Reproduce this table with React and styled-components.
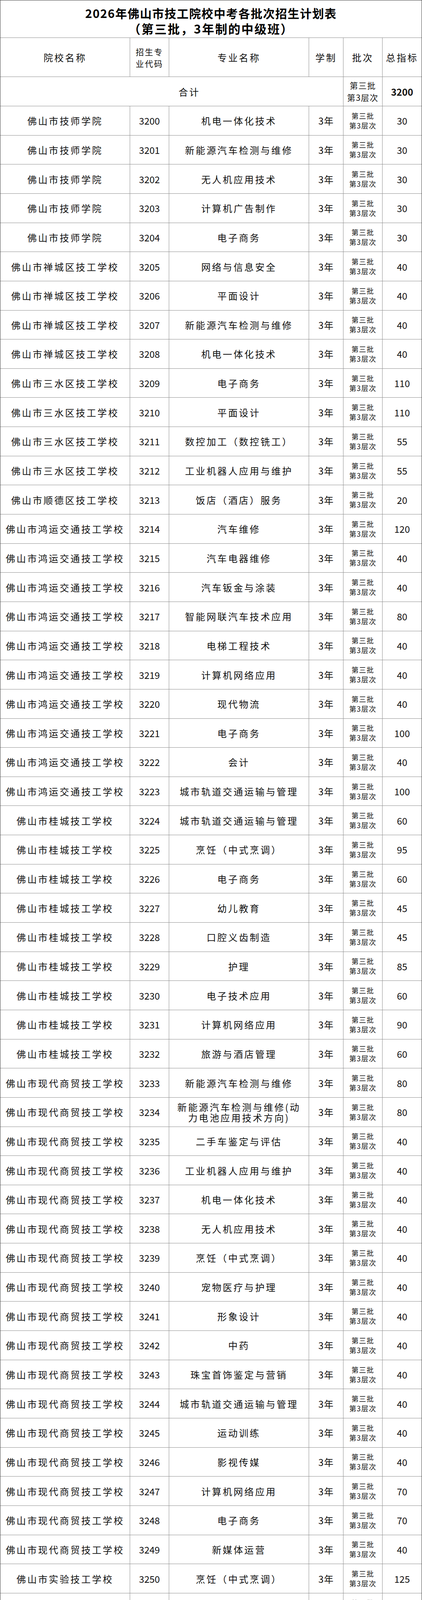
import React from "react";
import styled, { createGlobalStyle } from "styled-components";

const GlobalStyle = createGlobalStyle`
  html, body { margin: 0; padding: 0; background: #ffffff; width: 1080px; height: 4677px; overflow: hidden; }
  body { font-family: "Noto Sans CJK SC", "Noto Sans", sans-serif; color: #111; }
  #root { width: 1080px; height: 4677px; }
  * { box-sizing: border-box; }
`;

const LINE = "#8f8f8f";

const Sheet = styled.div`
  width: 1080px;
  height: 4677px;
  display: grid;
  grid-template-columns: 332px 100px 358px 88px 100px 100px;
  grid-template-rows: 96px 100px 75px repeat(59, 1fr);
  border: 1px solid #3c3c3c;
  background: #fff;
  overflow: hidden;
`;

const Cell = styled.div`
  display: flex;
  flex-direction: column;
  align-items: center;
  justify-content: center;
  text-align: center;
  min-width: 0;
  min-height: 0;
  overflow: hidden;
  border-right: ${(p) => (p.$lastCol ? "none" : `1px solid ${LINE}`)};
  border-bottom: ${(p) => (p.$lastRow ? "none" : `1px solid ${LINE}`)};
  font-size: 24px;
  line-height: 27px;
  color: #111;
  white-space: nowrap;
`;

const TitleCell = styled(Cell)`
  grid-column: 1 / -1;
  justify-content: flex-start;
  padding-top: 12px;
  font-weight: 700;
  line-height: 40px;
  color: #000;
`;

const TitleLine = styled.div`
  letter-spacing: ${(p) => p.$spacing}px;
  font-size: ${(p) => p.$size}px;
`;

const HeadCell = styled(Cell)`
  letter-spacing: 3.5px;
`;

const SmallHeadCell = styled(Cell)`
  font-size: 21px;
  line-height: 30px;
  letter-spacing: 2.5px;
`;

const TotalLabel = styled(Cell)`
  grid-column: 1 / span 4;
  padding-left: 90px;
  letter-spacing: 3.5px;
`;

const SchoolCell = styled(Cell)`
  letter-spacing: 3.6px;
`;

const CodeCell = styled(Cell)`
  letter-spacing: 0;
`;

const MajorCell = styled(Cell)`
  letter-spacing: 3.6px;
`;

const YearsCell = styled(Cell)`
  letter-spacing: 1px;
`;

const BatchCell = styled(Cell)`
  font-size: ${(p) => (p.$big ? 21 : 18)}px;
  line-height: ${(p) => (p.$big ? 31 : 25)}px;
  letter-spacing: 1.4px;
`;

const QuotaCell = styled(Cell)`
  font-weight: ${(p) => (p.$bold ? 700 : 400)};
`;

const rows = [
  ["佛山市技师学院", "3200", "机电一体化技术", 30],
  ["佛山市技师学院", "3201", "新能源汽车检测与维修", 30],
  ["佛山市技师学院", "3202", "无人机应用技术", 30],
  ["佛山市技师学院", "3203", "计算机广告制作", 30],
  ["佛山市技师学院", "3204", "电子商务", 30],
  ["佛山市禅城区技工学校", "3205", "网络与信息安全", 40],
  ["佛山市禅城区技工学校", "3206", "平面设计", 40],
  ["佛山市禅城区技工学校", "3207", "新能源汽车检测与维修", 40],
  ["佛山市禅城区技工学校", "3208", "机电一体化技术", 40],
  ["佛山市三水区技工学校", "3209", "电子商务", 110],
  ["佛山市三水区技工学校", "3210", "平面设计", 110],
  ["佛山市三水区技工学校", "3211", "数控加工（数控铣工）", 55],
  ["佛山市三水区技工学校", "3212", "工业机器人应用与维护", 55],
  ["佛山市顺德区技工学校", "3213", "饭店（酒店）服务", 20],
  ["佛山市鸿运交通技工学校", "3214", "汽车维修", 120],
  ["佛山市鸿运交通技工学校", "3215", "汽车电器维修", 40],
  ["佛山市鸿运交通技工学校", "3216", "汽车钣金与涂装", 40],
  ["佛山市鸿运交通技工学校", "3217", "智能网联汽车技术应用", 80],
  ["佛山市鸿运交通技工学校", "3218", "电梯工程技术", 40],
  ["佛山市鸿运交通技工学校", "3219", "计算机网络应用", 40],
  ["佛山市鸿运交通技工学校", "3220", "现代物流", 40],
  ["佛山市鸿运交通技工学校", "3221", "电子商务", 100],
  ["佛山市鸿运交通技工学校", "3222", "会计", 40],
  ["佛山市鸿运交通技工学校", "3223", "城市轨道交通运输与管理", 100],
  ["佛山市桂城技工学校", "3224", "城市轨道交通运输与管理", 60],
  ["佛山市桂城技工学校", "3225", "烹饪（中式烹调）", 95],
  ["佛山市桂城技工学校", "3226", "电子商务", 60],
  ["佛山市桂城技工学校", "3227", "幼儿教育", 45],
  ["佛山市桂城技工学校", "3228", "口腔义齿制造", 45],
  ["佛山市桂城技工学校", "3229", "护理", 85],
  ["佛山市桂城技工学校", "3230", "电子技术应用", 60],
  ["佛山市桂城技工学校", "3231", "计算机网络应用", 90],
  ["佛山市桂城技工学校", "3232", "旅游与酒店管理", 60],
  ["佛山市现代商贸技工学校", "3233", "新能源汽车检测与维修", 80],
  ["佛山市现代商贸技工学校", "3234", ["新能源汽车检测与维修(动", "力电池应用技术方向)"], 80],
  ["佛山市现代商贸技工学校", "3235", "二手车鉴定与评估", 40],
  ["佛山市现代商贸技工学校", "3236", "工业机器人应用与维护", 40],
  ["佛山市现代商贸技工学校", "3237", "机电一体化技术", 40],
  ["佛山市现代商贸技工学校", "3238", "无人机应用技术", 40],
  ["佛山市现代商贸技工学校", "3239", "烹饪（中式烹调）", 40],
  ["佛山市现代商贸技工学校", "3240", "宠物医疗与护理", 40],
  ["佛山市现代商贸技工学校", "3241", "形象设计", 40],
  ["佛山市现代商贸技工学校", "3242", "中药", 40],
  ["佛山市现代商贸技工学校", "3243", "珠宝首饰鉴定与营销", 40],
  ["佛山市现代商贸技工学校", "3244", "城市轨道交通运输与管理", 40],
  ["佛山市现代商贸技工学校", "3245", "运动训练", 40],
  ["佛山市现代商贸技工学校", "3246", "影视传媒", 40],
  ["佛山市现代商贸技工学校", "3247", "计算机网络应用", 70],
  ["佛山市现代商贸技工学校", "3248", "电子商务", 70],
  ["佛山市现代商贸技工学校", "3249", "新媒体运营", 40],
  ["佛山市实验技工学校", "3250", "烹饪（中式烹调）", 125],
  ["佛山市实验技工学校", "3251", "护理", 25],
  ["佛山市实验技工学校", "3252", "药物制剂", 25],
  ["佛山市实验技工学校", "3253", "汽车维修", 50],
  ["佛山市实验技工学校", "3254", "电子商务", 25],
  ["佛山市实验技工学校", "3255", "计算机应用与维修", 50],
  ["佛山市实验技工学校", "3256", "平面设计", 25],
  ["佛山市实验技工学校", "3257", "美容美发与造型（美容）", 25],
  ["佛山市实验技工学校", "3258", "电气自动化设备安装与维修", 50],
];

function Lines({ value }) {
  const list = Array.isArray(value) ? value : [value];
  return list.map((line, i) => <span key={i}>{line}</span>);
}

export default function App() {
  const last = rows.length - 1;
  return (
    <>
      <GlobalStyle />
      <Sheet>
        <TitleCell $lastCol>
          <TitleLine $spacing={1.5} $size={30}>2026年佛山市技工院校中考各批次招生计划表</TitleLine>
          <TitleLine $spacing={2.5} $size={31}>（第三批，3年制的中级班）</TitleLine>
        </TitleCell>

        <HeadCell>院校名称</HeadCell>
        <SmallHeadCell>
          <span>招生专</span>
          <span>业代码</span>
        </SmallHeadCell>
        <HeadCell>专业名称</HeadCell>
        <HeadCell>学制</HeadCell>
        <HeadCell>批次</HeadCell>
        <HeadCell $lastCol>总指标</HeadCell>

        <TotalLabel>合计</TotalLabel>
        <BatchCell $big>
          <span>第三批</span>
          <span>第3层次</span>
        </BatchCell>
        <QuotaCell $lastCol $bold>3200</QuotaCell>

        {rows.map(([school, code, major, quota], i) => {
          const end = i === last;
          return (
            <React.Fragment key={code}>
              <SchoolCell $lastRow={end}>{school}</SchoolCell>
              <CodeCell $lastRow={end}>{code}</CodeCell>
              <MajorCell $lastRow={end}>
                <Lines value={major} />
              </MajorCell>
              <YearsCell $lastRow={end}>3年</YearsCell>
              <BatchCell $lastRow={end}>
                <span>第三批</span>
                <span>第3层次</span>
              </BatchCell>
              <QuotaCell $lastRow={end} $lastCol>
                {quota}
              </QuotaCell>
            </React.Fragment>
          );
        })}
      </Sheet>
    </>
  );
}
